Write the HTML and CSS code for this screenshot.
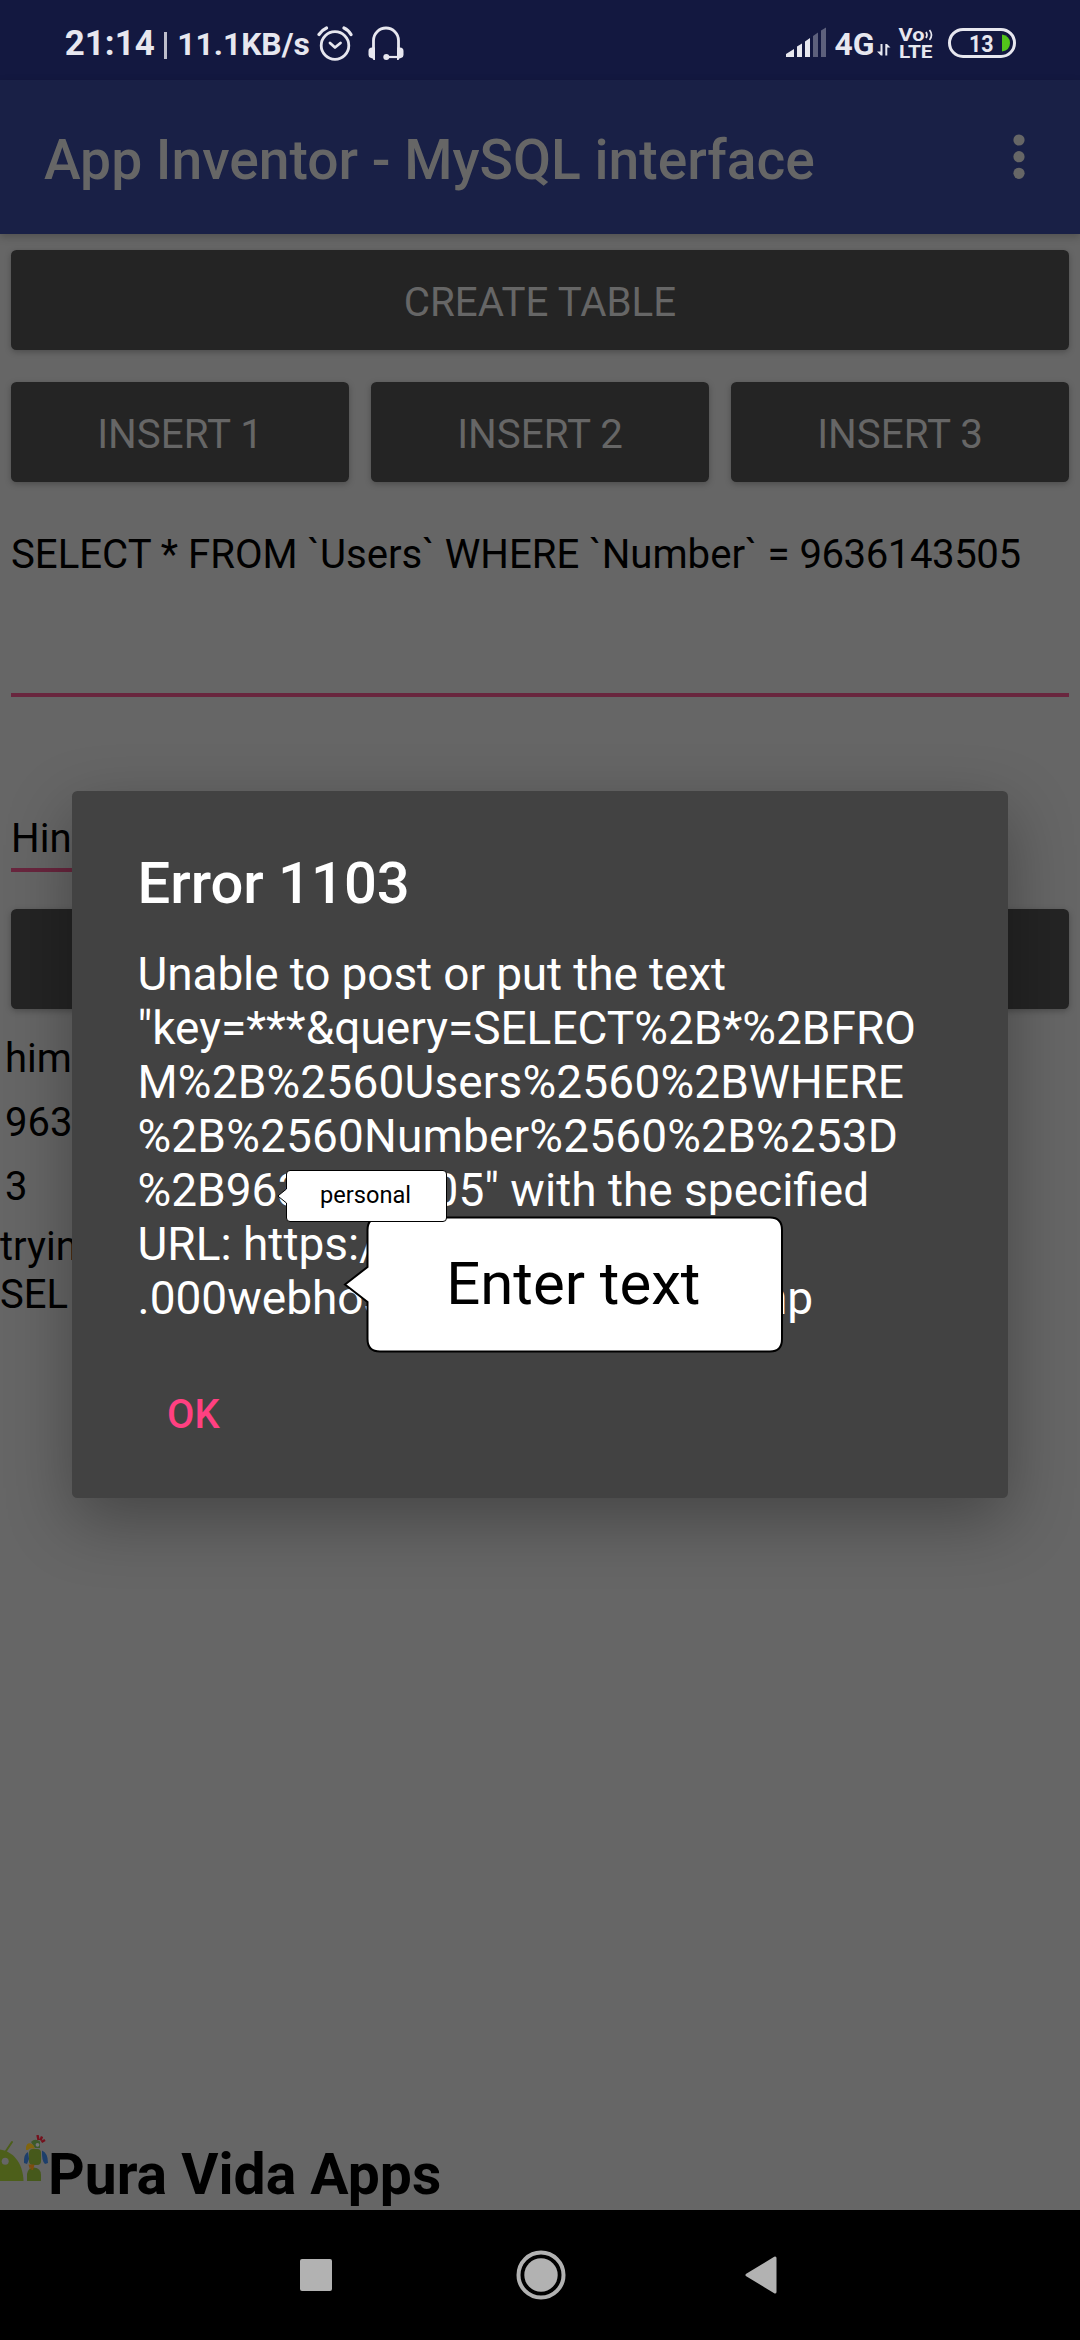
FILE: index.html
```
<!DOCTYPE html>
<html lang="en">
<head>
<meta charset="utf-8">
<title>App Inventor - MySQL interface</title>
<link rel="stylesheet" href="styles.css">
</head>
<body>
<div class="phone">
  <header class="status">
    <span class="clock">21:14</span>
    <span class="divider"></span>
    <span class="speed">11.1KB/s</span>
    <svg class="alarm" width="36" height="38" viewBox="0 0 36 38" fill="none" stroke="#e7e7ef" stroke-linecap="round" stroke-linejoin="round">
      <circle cx="18" cy="20.5" r="13.8" stroke-width="2.8"/>
      <path d="M13 18l5 4.500 5.500-4.500" stroke-width="2.800"/>
      <path d="M2 9.500Q5 5 9.500 3M27 3Q31.500 5 34 9.500" stroke-width="3.200"/>
    </svg>
    <svg class="headset" width="36" height="36" viewBox="0 0 36 36">
      <path d="M5.500 24V14.500a12.500 12.500 0 0 1 25 0V24" fill="none" stroke="#e7e7ef" stroke-width="2.800"/>
      <path d="M4 21.500h3V34H5.500Q5 32 3 32Q.5 31.500 .5 29V25Q.5 21.500 4 21.500ZM32 21.500h-3V34h1.500Q31 32 33 32q2.500-.5 2.500-3v-4q0-3.500-3.500-3.500Z" fill="#e7e7ef"/>
      <path d="M18 31H30" stroke="#e7e7ef" stroke-width="2.200"/>
      <circle cx="18.300" cy="31" r="3" fill="#e7e7ef"/>
    </svg>
    <svg class="signals" width="240" height="40" viewBox="0 0 240 40" fill="#e7e7ef">
      <path d="M6 37V34L14 29V37ZM17 37V26.500L22 23.500V37ZM25 37V21.500L30 18V37Z"/>
      <path d="M33 37V16L38 12.500V37ZM41 37V10.500L46 7.500V37Z" opacity=".35"/>
      <text class="net" x="54.4" y="35" textLength="40" lengthAdjust="spacingAndGlyphs">4G</text>
      <path d="M100.500 24h2v11.500h-1.600L97 31.500h3.500ZM105.300 35.500h2v-8h3.200L107 24h-1.700Z"/>
      <text class="volte" x="118.5" y="20.700" textLength="26" lengthAdjust="spacingAndGlyphs">Vo</text>
      <path d="M146 12q2 3 0 6M149.500 10q4 5 0 10" fill="none" stroke="#e7e7ef" stroke-width="1.700"/>
      <text class="volte" x="119" y="37.800" textLength="33.500" lengthAdjust="spacingAndGlyphs">LTE</text>
      <rect x="169.500" y="9.400" width="65" height="27" rx="13.500" fill="none" stroke="#e7e7ef" stroke-width="3"/>
      <text class="level" x="189" y="32.200" textLength="24.500" lengthAdjust="spacingAndGlyphs">13</text>
      <path d="M222 14.500Q230 16 230 23T222 31.500Z" fill="#52c41a"/>
    </svg>
  </header>

  <div class="appbar">
    <h1 class="apptitle">App Inventor - MySQL interface</h1>
    <svg class="kebab" width="12" height="46" viewBox="0 0 12 46" fill="#666"><circle cx="6" cy="6" r="5.600"/><circle cx="6" cy="22.700" r="5.600"/><circle cx="6" cy="39.300" r="5.600"/></svg>
  </div>

  <main class="screen">
    <div class="buttons">
      <div class="btn">CREATE TABLE</div>
      <div class="row"><div class="btn">INSERT 1</div><div class="btn">INSERT 2</div><div class="btn">INSERT 3</div></div>
    </div>
    <div class="field query">SELECT * FROM `Users` WHERE `Number` = <span class="digits">9636143505</span></div>
    <div class="field hint">Hin</div>
    <div class="btn submit"></div>
    <div class="results"><div>him</div><div>963</div><div>3</div></div>
    <div class="log"><div>tryin</div><div>SEL</div></div>
    <footer class="brand">
      <svg class="logo" width="48" height="46" viewBox="0 0 48 46">
        <path d="M6 16L12 7" stroke="#4d5f1a" stroke-width="2" stroke-linecap="round"/>
        <path d="M0 14.500C12 16 23 27 23.500 46H0Z" fill="#4d5f1a"/>
        <circle cx="5.200" cy="26.300" r="3.500" fill="#666"/>
        <path d="M27 46V39Q28 32.500 34 32.500Q41 33 41 40V46Z" fill="#46591b"/>
        <rect x="29" y="14" width="12" height="16" rx="4" fill="#46591b"/>
        <path d="M28 17Q23.500 19 24 28L27 29L29 24ZM42 15.500Q48 18 48 28L45 29Q41.500 26 42 15.500Z" fill="#1d3f6b"/>
        <path d="M31 7Q35 3 40 6.500L40 13H35Z" fill="#3d5a2a"/>
        <path d="M26 15V12Q27 7 31 8.500Q34.500 10 34.500 14Q30 12 28 15Z" fill="#81650e"/>
        <circle cx="37.500" cy="9.800" r="1.900" fill="#777"/>
        <path d="M28.500 29.500H34.500L33 35H31.500L31 32L30 35Z" fill="#7d4d0d"/>
        <path d="M37.500 0L38.500 5M42 1.500L40.500 5.500M45 5L41.500 7" stroke="#75111d" stroke-width="2.400"/>
      </svg>
      <span>Pura Vida Apps</span>
    </footer>
  </main>

  <nav class="nav">
    <svg width="32" height="32" viewBox="0 0 32 32"><rect width="32" height="32" rx="2" fill="#b2b2b2"/></svg>
    <svg width="50" height="50" viewBox="0 0 50 50"><circle cx="25" cy="25" r="22.500" fill="none" stroke="#b2b2b2" stroke-width="4"/><circle cx="25" cy="25" r="16.700" fill="#b2b2b2"/></svg>
    <svg width="32" height="38" viewBox="0 0 32 38"><path d="M2 19L30 2V36Z" fill="#b2b2b2" stroke="#b2b2b2" stroke-width="3" stroke-linejoin="round"/></svg>
  </nav>

  <section class="dialog">
    <h2 class="heading">Error 1103</h2>
    <p class="message"><span class="tight">Unable to post or put the text</span><br>"key=***&amp;query=SELECT%2B*%2BFRO<br><span class="loose">M%2B%2560Users%2560%2BWHERE<br>%2B%2560Number%2560%2B%253D</span><br>%2B9636143505" with the specified<br>URL: https://<br>.000webhostapp.com/mysql.php</p>
    <div class="ok">OK</div>
  </section>

  <div class="bubble large">
    <svg width="440" height="138" viewBox="0 0 440 138"><path d="M24.500 15Q24.500 2.500 37 2.500H427Q439 2.500 439 15V124Q439 136.500 427 136.500H37Q24.500 136.500 24.500 124V87L2 69.500L24.500 52Z" fill="#fff" stroke="#000" stroke-width="2"/></svg>
    <span>Enter text</span>
  </div>
  <div class="bubble small">
    <svg width="171" height="54" viewBox="0 0 171 54"><path d="M9.500 5Q9.500 1.500 13 1.500H166Q169.500 1.500 169.500 5V49Q169.500 52.500 166 52.500H13Q9.500 52.500 9.500 49V34L.8 27L9.500 20Z" fill="#fff" stroke="#000" stroke-width="1"/></svg>
    <span>personal</span>
  </div>
</div>
</body>
</html>
```
FILE: styles.css
```
* { box-sizing: border-box; }
body { margin: 0; background: #666; font-family: Roboto, "Noto Sans", sans-serif; color: #000; }
h1, h2, p { margin: 0; }
svg { display: block; flex: none; }

.phone { position: relative; display: flex; flex-direction: column; width: 1080px; height: 2340px; overflow: hidden; background: #666; }

.status { display: flex; align-items: center; height: 80px; padding: 7px 60px 0 64.8px; background: #131840; color: #e7e7ef; font-weight: 700; white-space: nowrap; }
.clock { font-size: 34.9px; line-height: 41px; }
.divider { width: 3px; height: 27px; margin-left: 9px; margin-top: 4px; background: #bdbdcb; }
.speed { margin-left: 10.5px; font-size: 31.8px; line-height: 38px; }
.alarm { margin-left: 7px; }
.headset { margin-left: 15.5px; }
.signals { margin-left: auto; margin-top: -7px; overflow: visible; }
.net { font-size: 32px; }
.volte { font-size: 17.5px; }
.level { font-size: 24px; }

.appbar { position: relative; z-index: 1; display: flex; align-items: center; justify-content: space-between; height: 154px; padding: 6px 55px 0 44px; background: #192046; box-shadow: 0 3px 8px rgba(0, 0, 0, .22); color: #666; }
.apptitle { font-size: 55.2px; font-weight: 500; line-height: 65px; white-space: nowrap; }
.kebab { margin-top: -6px; }

.screen { display: flex; flex: 1; flex-direction: column; }
.buttons { display: grid; gap: 32px; padding: 16px 11px 0; }
.row { display: grid; grid-template-columns: repeat(3, 1fr); gap: 22px; }
.btn { display: flex; align-items: center; justify-content: center; height: 100px; padding-top: 5px; border-radius: 5.5px; background: #242424; box-shadow: 0 2px 6px rgba(0, 0, 0, .25); color: #666; font-size: 40.3px; line-height: 47px; }
.field { margin: 0 11px; border-bottom: 4px solid #69263e; font-size: 40.15px; line-height: 47px; white-space: nowrap; }
.query { height: 166px; margin-top: 49px; }
.digits { letter-spacing: -.45px; }
.hint { width: 430px; height: 57px; margin-top: 118px; }
.submit { margin: 37px 11px 0; }
.results { margin-top: 18px; padding-left: 5px; font-size: 40px; line-height: 64px; }
.log { margin-top: 3.5px; font-size: 40px; line-height: 48.4px; }
.brand { display: flex; align-items: flex-start; margin-top: auto; padding-bottom: 2px; font-size: 57px; font-weight: 700; line-height: 67px; }
.logo { margin-top: -6px; }

.nav { display: flex; align-items: center; height: 130px; padding-left: 300px; background: #000; }
.nav svg + svg { margin-left: 183.5px; }
.nav svg:last-child { margin-left: 179px; }

.dialog { position: absolute; left: 72px; top: 791px; width: 936px; height: 707px; padding: 58px 24px 0 65.5px; border-radius: 5.5px; background: #424242; box-shadow: 0 22px 66px rgba(0, 0, 0, .32); color: #fff; }
.heading { font-size: 57.9px; font-weight: 500; line-height: 68px; }
.message { margin-top: 30px; font-size: 46px; line-height: 54px; white-space: nowrap; }
.tight { letter-spacing: -.12px; }
.loose { letter-spacing: .16px; }
.ok { margin: 66px 0 0 29.5px; color: #ff4081; font-size: 39.8px; font-weight: 500; line-height: 48px; }

.bubble { position: absolute; white-space: nowrap; }
.bubble span { position: absolute; top: 50%; transform: translateY(-50%); }
.large { left: 343px; top: 1215px; font-size: 59.9px; }
.large span { left: 103.2px; margin-top: -1.5px; }
.small { left: 276.5px; top: 1169px; font-size: 23.6px; }
.small span { left: 43.5px; margin-top: -1px; }
```
